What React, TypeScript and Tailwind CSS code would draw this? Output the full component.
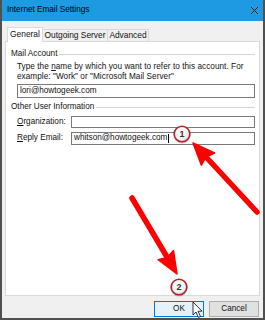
import React from "react";

const font = { fontFamily: '"Liberation Sans", Arial, sans-serif' };

function Circle({ cx, cy, n }: { cx: number; cy: number; n: string }) {
  return (
    <g>
      <circle cx={cx} cy={cy + 1} r={8.6} fill="rgba(0,0,0,0.22)" />
      <circle cx={cx} cy={cy} r={7.8} fill="url(#cg)" stroke="#b3202a" strokeWidth={1.6} />
      <text x={cx} y={cy + 3.2} textAnchor="middle" fontSize="9" fontWeight="bold" fill="#333" fontFamily="Liberation Sans, Arial, sans-serif">
        {n}
      </text>
    </g>
  );
}

export default function App() {
  return (
    <div className="w-[265px] h-[320px] relative overflow-hidden" style={font}>
      <div className="w-full h-full flex flex-col bg-[#f0f0f0] border-x-2 border-b-2 border-[#505050]">
        {/* title bar */}
        <div className="h-[21px] bg-[#1e9ae2] flex items-center justify-between pl-[5px] pr-[4px] shrink-0">
          <span className="text-[8.2px] text-black">Internet Email Settings</span>
          <svg width="9" height="9" viewBox="0 0 9 9">
            <path d="M1 1 L8 8 M8 1 L1 8" stroke="#1a1a1a" strokeWidth="1" />
          </svg>
        </div>
        {/* tabs */}
        <div className="flex items-end h-[17px] mt-[3px] ml-[5px] shrink-0 relative z-10">
          <div className="h-[15px] w-[36px] bg-white border border-[#d9d9d9] border-b-0 flex items-center justify-center text-[8.4px] text-[#111] mb-[-1px] pb-[1px]">
            General
          </div>
          <div className="h-[12px] w-[65px] bg-[#f0f0f0] border border-[#d9d9d9] border-l-0 border-b-0 flex items-center justify-center text-[8.4px] text-[#111]">
            Outgoing Server
          </div>
          <div className="h-[12px] w-[41px] bg-[#f0f0f0] border border-[#d9d9d9] border-l-0 border-b-0 flex items-center justify-center text-[8.4px] text-[#111]">
            Advanced
          </div>
        </div>
        {/* panel */}
        <div className="ml-[3px] mr-[3px] h-[255px] bg-white border border-[#d9d9d9] flex flex-col pl-[5px] pr-[4px] text-[8.2px] text-[#111] shrink-0">
          <div className="flex items-center gap-[2px] mt-[7px] h-[10px]">
            <span>Mail Account</span>
            <div className="flex-1 border-t border-[#d4d4d4]" />
          </div>
          <div className="pl-[6px] mt-[3px] leading-[9.5px] tracking-[0.05px]">
            <div>Type the <span className="underline">n</span>ame by which you want to refer to this account. For</div>
            <div>example: "Work" or "Microsoft Mail Server"</div>
          </div>
          <div className="ml-[6px] mt-[3px] h-[14px] border border-[#7a7a7a] flex items-center pl-[2px]">
            lori@howtogeek.com
          </div>
          <div className="flex items-center gap-[2px] mt-[4px] h-[10px]">
            <span>Other User Information</span>
            <div className="flex-1 border-t border-[#d4d4d4]" />
          </div>
          <div className="flex items-center mt-[4px] pl-[6px] h-[12px]">
            <span className="w-[54px]"><span className="underline">O</span>rganization:</span>
            <div className="flex-1 h-[12px] border border-[#7a7a7a]" />
          </div>
          <div className="flex items-center mt-[4px] pl-[6px] h-[13px]">
            <span className="w-[54px]"><span className="underline">R</span>eply Email:</span>
            <div className="flex-1 h-[13px] border border-[#7a7a7a] flex items-center pl-[2px]">
              whitson@howtogeek.com<span className="w-px h-[9px] bg-black ml-[1px]" />
            </div>
          </div>
        </div>
        {/* buttons */}
        <div className="flex justify-end gap-[5px] mt-[5px] pr-[4px]">
          <div className="w-[50px] h-[16px] bg-[#e5f1fb] border border-[#0078d7] flex items-center justify-center text-[8.2px] text-[#111]">
            OK
          </div>
          <div className="w-[50px] h-[16px] bg-[#e1e1e1] border border-[#adadad] flex items-center justify-center text-[8.2px] text-[#111]">
            Cancel
          </div>
        </div>
      </div>
      {/* overlays */}
      <svg className="absolute inset-0 pointer-events-none" width="265" height="320" viewBox="0 0 265 320">
        <defs>
          <radialGradient id="cg" cx="0.4" cy="0.35" r="0.7">
            <stop offset="0" stopColor="#ffffff" />
            <stop offset="0.7" stopColor="#f2f2f2" />
            <stop offset="1" stopColor="#cfcfcf" />
          </radialGradient>
        </defs>
        {/* arrow 1 */}
        <line x1="257" y1="212" x2="207" y2="158" stroke="#ff0000" strokeWidth="5.5" strokeLinecap="round" />
        <path d="M193 143 L214.6 153 L206 157 L201.4 165.2 Z" fill="#ff0000" stroke="#ff0000" strokeWidth="1.5" strokeLinejoin="round" />
        {/* arrow 2 */}
        <line x1="132" y1="198" x2="167" y2="257" stroke="#ff0000" strokeWidth="5.5" strokeLinecap="round" />
        <path d="M177 274 L173.5 250.5 L167.3 257.6 L158.1 259.7 Z" fill="#ff0000" stroke="#ff0000" strokeWidth="1.5" strokeLinejoin="round" />
        <Circle cx={182} cy={134} n="1" />
        <Circle cx={179} cy={287} n="2" />
        {/* cursor */}
        <path d="M193 302 L193 315 L196 312 L198.5 317.5 L200.5 316.5 L198 311.2 L202 311.2 Z" fill="#fff" stroke="#000" strokeWidth="0.8" strokeLinejoin="round" />
      </svg>
    </div>
  );
}
